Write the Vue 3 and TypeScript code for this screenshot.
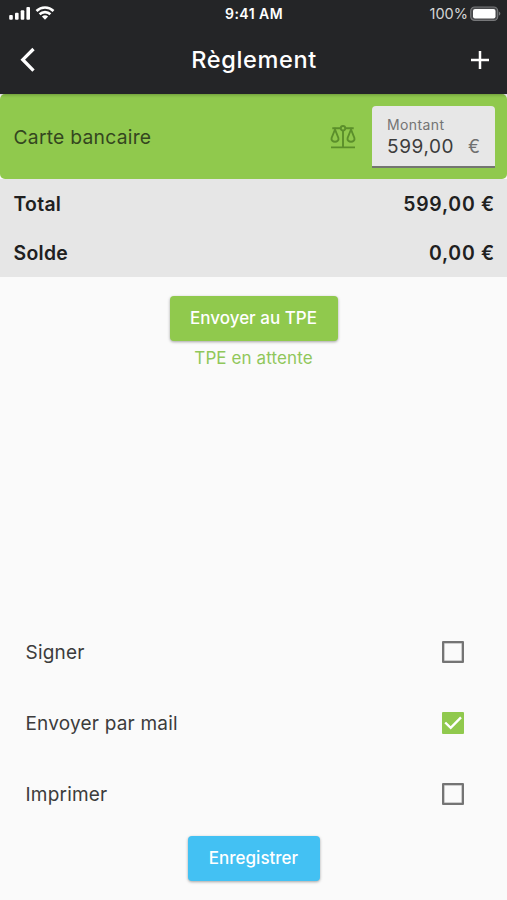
<script setup lang="ts">
import { computed, ref } from 'vue'

interface Option {
  label: string
  checked: boolean
}

const amount = ref(599)
const paid = ref(599)
const options = ref<Option[]>([
  { label: 'Signer', checked: false },
  { label: 'Envoyer par mail', checked: true },
  { label: 'Imprimer', checked: false },
])

const format = (value: number): string => value.toFixed(2).replace('.', ',')
const totals = computed(() => [
  { label: 'Total', value: amount.value },
  { label: 'Solde', value: amount.value - paid.value },
])
</script>

<template>
  <main class="screen">
    <header class="header">
      <div class="status">
        <div class="signals">
          <svg width="22" height="16" viewBox="0 0 22 16" fill="#fff">
            <rect x="0.2" y="10" width="3.6" height="4.8" rx="1" />
            <rect x="6" y="7.8" width="3.6" height="7" rx="1" />
            <rect x="11.7" y="5.2" width="3.6" height="9.6" rx="1" />
            <rect x="17.4" y="2" width="3.6" height="12.8" rx="1" />
          </svg>
          <svg width="20" height="16" viewBox="0 0 20 16" fill="none" stroke="#fff" stroke-width="2.6">
            <path d="M1.5 6a12.2 12.2 0 0 1 17 0" />
            <path d="M4.6 9.3a7.8 7.8 0 0 1 10.8 0" />
            <path d="M10 14.7l-3.1-3.1a4.5 4.5 0 0 1 6.2 0z" fill="#fff" stroke="none" />
          </svg>
        </div>
        <span class="time">9:41 AM</span>
        <div class="power">
          <span class="percent">100%</span>
          <svg width="31" height="16" viewBox="0 0 31 16">
            <rect x="0.7" y="1" width="27" height="13.4" rx="4" fill="#48494b" stroke="#77787a" stroke-width="1.2" />
            <rect x="3" y="3" width="22.5" height="9.4" rx="2" fill="#fff" />
            <path d="M28.9 5.6c2 .8 2 3.4 0 4.2z" fill="#77787a" />
          </svg>
        </div>
      </div>
      <div class="navbar">
        <button class="icon-button" aria-label="Retour">
          <svg width="16" height="26" viewBox="0 0 16 26" fill="none" stroke="#fff" stroke-width="3.3">
            <path d="M13.5 2 2.8 12.7l10.7 10.9" />
          </svg>
        </button>
        <h1 class="title">Règlement</h1>
        <button class="icon-button" aria-label="Ajouter">
          <svg width="18" height="18" viewBox="0 0 18 18" fill="none" stroke="#fff" stroke-width="2.5">
            <path d="M9 0v18M0 9h18" />
          </svg>
        </button>
      </div>
    </header>

    <section class="summary">
      <div class="payment">
        <span class="method">Carte bancaire</span>
        <svg class="scales" width="26" height="26" viewBox="0 0 26 26" fill="none" stroke="#5b8f2b" stroke-width="1.9">
          <path d="M1 23.4h24M13 6.500v17M2.300 4.200h8.200M15.500 4.200h8.200" />
          <circle cx="13" cy="4.200" r="2.200" />
          <path d="M5 5.500 1.600 14c-1.300 5 8.100 5 6.800 0zM21 5.500 17.600 14c-1.300 5 8.100 5 6.800 0z" stroke-width="1.900" />
        </svg>
        <div class="field">
          <span class="field-label">Montant</span>
          <div class="field-line">
            <span class="field-value">{{ format(amount) }}</span>
            <span class="field-unit">€</span>
          </div>
        </div>
      </div>
      <div v-for="total in totals" :key="total.label" class="total">
        <span class="total-label">{{ total.label }}</span>
        <span class="total-value">{{ format(total.value) }} €</span>
      </div>
    </section>

    <section class="terminal">
      <button class="button send">Envoyer au TPE</button>
      <span class="state">TPE en attente</span>
    </section>

    <section class="options">
      <div v-for="option in options" :key="option.label" class="option" @click="option.checked = !option.checked">
        <span>{{ option.label }}</span>
        <span class="box" :class="{ checked: option.checked }">
          <svg v-if="option.checked" width="22" height="22" viewBox="0 0 22 22" fill="none" stroke="#fff" stroke-width="2.4">
            <path d="M3.2 10.500l5.500 5.300L19 5.400" />
          </svg>
        </span>
      </div>
    </section>

    <footer class="footer">
      <button class="button save">Enregistrer</button>
    </footer>
  </main>
</template>

<style>
body {
  margin: 0;
  background: #fafafa;
}
</style>

<style scoped>
.screen {
  box-sizing: border-box;
  width: 100%;
  height: 900px;
  display: flex;
  flex-direction: column;
  overflow: hidden;
  background: #fafafa;
  color: #3c3c3c;
  font-family: Inter, 'Liberation Sans', sans-serif;
  font-size: 19px;
}

button {
  border: 0;
  padding: 0;
  background: none;
  color: inherit;
  font-family: inherit;
}

svg {
  display: block;
}

.header {
  height: 94px;
  flex: none;
  background: #242527;
  color: #fff;
  box-shadow: 0 1px 3px rgba(0, 0, 0, 0.25);
  z-index: 1;
}

.status {
  height: 27px;
  padding: 0 6px 0 9px;
  display: grid;
  grid-template-columns: 1fr auto 1fr;
  align-items: center;
}

.signals {
  display: flex;
  gap: 4px;
  padding-bottom: 1px;
}

.time {
  margin-right: 2px;
  font-size: 14px;
  font-weight: 600;
  letter-spacing: 0.45px;
}

.power {
  display: flex;
  align-items: center;
  justify-content: flex-end;
  gap: 2px;
}

.percent {
  font-size: 14.5px;
  color: #d5d5d6;
}

.navbar {
  height: 66px;
  padding: 0 18px 0 20px;
  display: grid;
  grid-template-columns: 18px 1fr 18px;
  align-items: center;
}

.icon-button {
  display: flex;
}

.title {
  margin: 0 1px 0 0;
  text-align: center;
  font-size: 23.5px;
  font-weight: 500;
  line-height: 30px;
  letter-spacing: 0.65px;
}

.summary {
  flex: none;
  background: #fafafa;
}

.payment {
  height: 85px;
  box-sizing: border-box;
  padding: 0 12px 0 13.5px;
  display: flex;
  align-items: center;
  border-radius: 5px;
  background: #90c94d;
}

.method {
  flex: 1;
  padding-top: 1px;
  color: #34461f;
  font-size: 19.3px;
  letter-spacing: 0.25px;
}

.scales {
  margin-right: 16px;
}

.field {
  box-sizing: border-box;
  width: 123px;
  height: 62px;
  padding: 11px 15px 0;
  border-radius: 4px 4px 0 0;
  border-bottom: 2px solid #737571;
  background: #e7e7e7;
}

.field-label {
  display: block;
  color: #747474;
  font-size: 14px;
  line-height: 16px;
  letter-spacing: 0.4px;
}

.field-line {
  display: flex;
  justify-content: space-between;
  line-height: 27px;
}

.field-value {
  letter-spacing: 0.6px;
}

.field-unit {
  color: #707070;
  font-size: 18px;
}

.total {
  height: 49px;
  box-sizing: border-box;
  padding: 0 12px 0 13.5px;
  display: flex;
  align-items: center;
  justify-content: space-between;
  background: #e6e6e6;
  color: #202020;
  font-size: 19.4px;
  font-weight: 600;
}

.total-label {
  letter-spacing: 0.3px;
}

.total-value {
  letter-spacing: 0.75px;
}

.terminal {
  padding-top: 19px;
  display: flex;
  flex-direction: column;
  align-items: center;
}

.button {
  height: 45px;
  padding-bottom: 1px;
  border-radius: 4px;
  color: #fff;
  font-size: 17px;
  font-weight: 500;
  box-shadow: 0 1px 3px rgba(0, 0, 0, 0.35);
}

.send {
  width: 168px;
  background: #90c94d;
}

.state {
  margin-top: 6px;
  color: #90c75a;
  font-size: 17px;
  line-height: 22px;
  letter-spacing: 0.1px;
}

.options {
  margin-top: auto;
}

.option {
  height: 71px;
  padding: 0 43px 0 25.5px;
  display: flex;
  align-items: center;
  justify-content: space-between;
  letter-spacing: 0.2px;
}

.box {
  box-sizing: border-box;
  width: 22px;
  height: 22px;
  margin-bottom: 2px;
  border: 2px solid #747474;
  border-radius: 1px;
  box-shadow: inset 0 0 0 0.5px #a0a0a0;
}

.box.checked {
  border: 0;
  background: #90c94d;
  box-shadow: none;
}

.footer {
  box-sizing: border-box;
  height: 70px;
  padding-top: 6px;
  flex: none;
  display: flex;
  justify-content: center;
}

.save {
  width: 132px;
  background: #43c1f3;
}
</style>
